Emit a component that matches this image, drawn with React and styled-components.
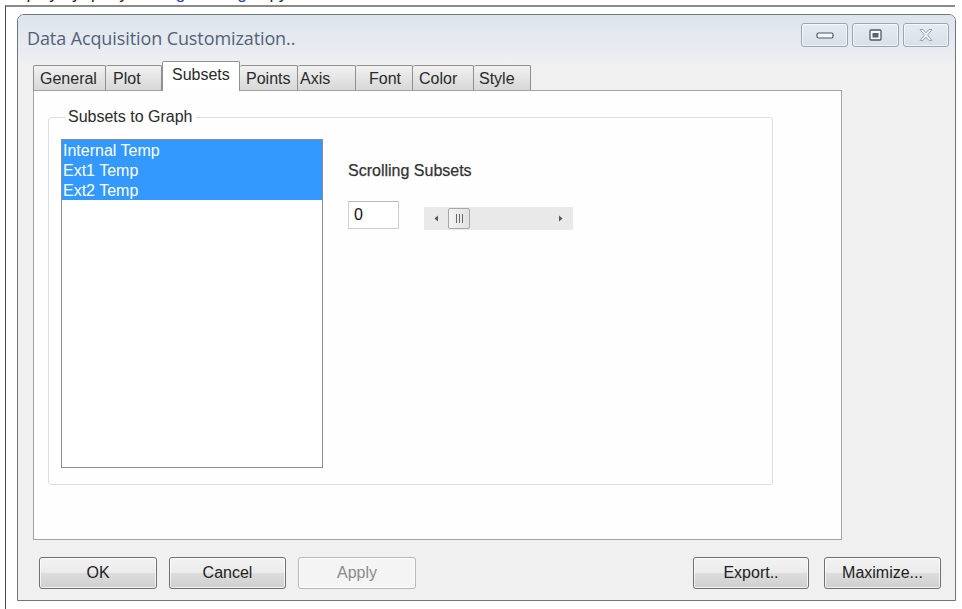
import React from 'react';
import styled, { createGlobalStyle } from 'styled-components';

const GlobalStyle = createGlobalStyle`
  html, body {
    margin: 0;
    padding: 0;
    background: #ffffff;
  }
  body {
    font-family: "Liberation Sans", Arial, sans-serif;
  }
`;

const Page = styled.div`
  width: 962px;
  height: 609px;
  overflow: hidden;
  background: #ffffff;
`;

const CutHeading = styled.div`
  height: 5px;
  overflow: hidden;
  padding-left: 2px;
`;

const CutText = styled.div`
  margin-top: -15px;
  font-size: 17px;
  line-height: 18px;
  color: #222;
  white-space: nowrap;

  span {
    color: #2d3fb0;
  }
`;

const Frame = styled.div`
  margin-left: 5px;
  width: 950px;
  height: 604px;
  border-top: 2px solid #8a8a8a;
  border-left: 1px solid #4a4a4a;
  box-sizing: border-box;
  padding: 7px 0 0 11px;
`;

const Dialog = styled.div`
  width: 939px;
  height: 587px;
  box-sizing: border-box;
  border: 1px solid #6d7680;
  border-radius: 7px 7px 0 0;
  background: #f0f0f0;
  display: flex;
  flex-direction: column;
  overflow: hidden;
`;

const TitleBar = styled.div`
  height: 46px;
  flex: none;
  display: flex;
  align-items: flex-start;
  justify-content: space-between;
  background: linear-gradient(#dde4ec, #e6ebf0 60%, #eceff2);
`;

const Title = styled.div`
  padding: 11px 0 0 9px;
  font-family: "Open Sans", "Noto Sans", sans-serif;
  font-size: 18px;
  letter-spacing: -0.1px;
  color: #52627a;
`;

const WindowButtons = styled.div`
  display: flex;
  gap: 4px;
  margin: 8px 6px 0 0;
`;

const WinButton = styled.div`
  width: ${({ $w }) => $w}px;
  height: 24px;
  box-sizing: border-box;
  border: 1px solid #9aa6b3;
  border-radius: 3px;
  background: linear-gradient(#e6ebf1, #d9e0e8);
  display: flex;
  align-items: center;
  justify-content: center;
  box-shadow: inset 0 0 0 1px rgba(255, 255, 255, 0.6);
`;

const TabStrip = styled.div`
  height: 30px;
  flex: none;
  display: flex;
  align-items: flex-end;
  padding-left: 15px;
  position: relative;
  z-index: 1;
`;

const Tab = styled.div`
  width: ${({ $w }) => $w}px;
  height: ${({ $active }) => ($active ? 30 : 26)}px;
  box-sizing: border-box;
  padding: 3px 0 0 ${({ $pl }) => $pl}px;
  border: 1px solid #8f8f8f;
  border-left-width: ${({ $first, $active }) => ($first || $active ? 1 : 0)}px;
  border-bottom: ${({ $active }) => ($active ? 'none' : '1px solid #a3a3a3')};
  border-radius: 2px 2px 0 0;
  background: ${({ $active }) =>
    $active ? '#ffffff' : 'linear-gradient(#f1f1f1, #e4e4e4 50%, #d7d7d7)'};
  font-size: 16px;
  line-height: 19px;
  color: #2a2a2a;
  white-space: nowrap;
`;

const Panel = styled.div`
  margin: -1px 0 0 15px;
  width: 809px;
  height: 450px;
  flex: none;
  box-sizing: border-box;
  border: 1px solid #a3a3a3;
  background: #fefefe;
  padding: 17px 0 0 14px;
`;

const GroupBox = styled.fieldset`
  margin: 0;
  width: 725px;
  height: 377px;
  box-sizing: border-box;
  border: 1px solid #d9dfe4;
  border-radius: 3px;
  padding: 13px 0 0 12px;
  display: flex;
  gap: 25px;
`;

const GroupLabel = styled.legend`
  padding: 0 3px;
  margin-left: 4px;
  font-size: 16px;
  line-height: 18px;
  color: #2a2a2a;
`;

const ListBox = styled.div`
  width: 262px;
  height: 329px;
  box-sizing: border-box;
  border: 1px solid #8a8e94;
  background: #ffffff;
`;

const ListItem = styled.div`
  height: 20px;
  line-height: 21px;
  padding-left: 1px;
  font-size: 16px;
  color: ${({ $selected }) => ($selected ? '#ffffff' : '#222')};
  background: ${({ $selected }) => ($selected ? '#3399ff' : 'transparent')};
`;

const ScrollColumn = styled.div`
  padding-top: 22px;
  display: flex;
  flex-direction: column;
`;

const FieldLabel = styled.div`
  font-size: 16px;
  line-height: 20px;
  color: #333;
  -webkit-text-stroke: 0.25px #333;
`;

const ScrollRow = styled.div`
  margin-top: 20px;
  display: flex;
  align-items: flex-start;
  gap: 25px;
`;

const NumberBox = styled.div`
  width: 51px;
  height: 28px;
  box-sizing: border-box;
  border: 1px solid #cfcfcf;
  border-top-color: #b9b9b9;
  background: #fff;
  padding: 3px 0 0 5px;
  font-size: 16px;
  line-height: 20px;
  color: #111;
`;

const ScrollBar = styled.div`
  margin-top: 6px;
  width: 149px;
  height: 23px;
  background: #e9e9e9;
  display: flex;
  align-items: center;
  padding: 0 10px 0 10px;
  box-sizing: border-box;
`;

const Thumb = styled.div`
  margin-left: 9px;
  width: 22px;
  height: 21px;
  box-sizing: border-box;
  border: 1px solid #a8a8a8;
  border-radius: 2px;
  background: linear-gradient(90deg, #f4f4f4, #e2e2e2);
  display: flex;
  align-items: center;
  justify-content: center;
  gap: 2px;

  i {
    width: 1px;
    height: 9px;
    background: #6a6a6a;
  }
`;

const Spacer = styled.div`
  flex: 1;
`;

const Footer = styled.div`
  flex: 1;
  display: flex;
  align-items: flex-start;
  padding: 17px 14px 0 21px;
  gap: 12px;
`;

const Button = styled.button`
  width: ${({ $w }) => $w || 118}px;
  height: 32px;
  margin-left: ${({ $ml }) => $ml || 0}px;
  box-sizing: border-box;
  border: 1px solid ${({ disabled }) => (disabled ? '#b5b9bc' : '#707070')};
  border-radius: 3px;
  background: ${({ disabled }) =>
    disabled ? '#f4f4f4' : 'linear-gradient(#f3f3f3, #ebebeb 50%, #dddddd 51%, #cfcfcf)'};
  box-shadow: inset 0 0 0 1px rgba(255, 255, 255, 0.7);
  font-family: "Liberation Sans", Arial, sans-serif;
  font-size: 16px;
  color: ${({ disabled }) => (disabled ? '#8a8a8a' : '#1e1e1e')};
  padding: 0;
`;

const tabs = [
  { label: 'General', w: 73, pl: 6, first: true },
  { label: 'Plot', w: 56, pl: 7 },
  { label: 'Subsets', w: 78, pl: 9, active: true },
  { label: 'Points', w: 58, pl: 6 },
  { label: 'Axis', w: 58, pl: 2 },
  { label: 'Font', w: 57, pl: 13 },
  { label: 'Color', w: 61, pl: 6 },
  { label: 'Style', w: 57, pl: 5 },
];

const subsets = ['Internal Temp', 'Ext1 Temp', 'Ext2 Temp'];

const MinimizeIcon = () => (
  <svg width="18" height="8" viewBox="0 0 18 8">
    <rect x="1" y="2" width="16" height="5" rx="1.5" fill="#f4f6f8" stroke="#4f5a66" strokeWidth="1.2" />
  </svg>
);

const MaximizeIcon = () => (
  <svg width="13" height="12" viewBox="0 0 13 12">
    <rect x="1" y="1" width="11" height="10" rx="1" fill="#f4f6f8" stroke="#4f5a66" strokeWidth="1.3" />
    <rect x="3.5" y="4" width="6" height="4.5" fill="#59636e" />
  </svg>
);

const CloseIcon = () => (
  <svg width="16" height="14" viewBox="0 0 16 14">
    <path
      d="M2 1.5 L5 1.5 L8 4.8 L11 1.5 L14 1.5 L9.6 7 L14 12.5 L11 12.5 L8 9.2 L5 12.5 L2 12.5 L6.4 7 Z"
      fill="#eef1f4"
      stroke="#9aa5b1"
      strokeWidth="1"
      strokeLinejoin="round"
    />
  </svg>
);

const ArrowLeft = () => (
  <svg width="5" height="7" viewBox="0 0 5 7">
    <path d="M4 0.5 L0.5 3.5 L4 6.5 Z" fill="#555" />
  </svg>
);

const ArrowRight = () => (
  <svg width="5" height="7" viewBox="0 0 5 7">
    <path d="M1 0.5 L4.5 3.5 L1 6.5 Z" fill="#555" />
  </svg>
);

export default function App() {
  return (
    <Page>
      <GlobalStyle />
      <CutHeading>
        <CutText>
          Display by query <span>Settings Dialog</span> copy
        </CutText>
      </CutHeading>
      <Frame>
        <Dialog>
          <TitleBar>
            <Title>Data Acquisition Customization..</Title>
            <WindowButtons>
              <WinButton $w={47}>
                <MinimizeIcon />
              </WinButton>
              <WinButton $w={47}>
                <MaximizeIcon />
              </WinButton>
              <WinButton $w={46}>
                <CloseIcon />
              </WinButton>
            </WindowButtons>
          </TitleBar>

          <TabStrip>
            {tabs.map((t) => (
              <Tab key={t.label} $w={t.w} $pl={t.pl} $active={t.active} $first={t.first}>
                {t.label}
              </Tab>
            ))}
          </TabStrip>

          <Panel>
            <GroupBox>
              <GroupLabel>Subsets to Graph</GroupLabel>
              <ListBox>
                {subsets.map((s) => (
                  <ListItem key={s} $selected>
                    {s}
                  </ListItem>
                ))}
              </ListBox>
              <ScrollColumn>
                <FieldLabel>Scrolling Subsets</FieldLabel>
                <ScrollRow>
                  <NumberBox>0</NumberBox>
                  <ScrollBar>
                    <ArrowLeft />
                    <Thumb>
                      <i />
                      <i />
                      <i />
                    </Thumb>
                    <Spacer />
                    <ArrowRight />
                  </ScrollBar>
                </ScrollRow>
              </ScrollColumn>
            </GroupBox>
          </Panel>

          <Footer>
            <Button>OK</Button>
            <Button $w={117}>Cancel</Button>
            <Button disabled>Apply</Button>
            <Spacer />
            <Button $w={116}>Export..</Button>
            <Button $w={117} $ml={3}>Maximize...</Button>
          </Footer>
        </Dialog>
      </Frame>
    </Page>
  );
}
